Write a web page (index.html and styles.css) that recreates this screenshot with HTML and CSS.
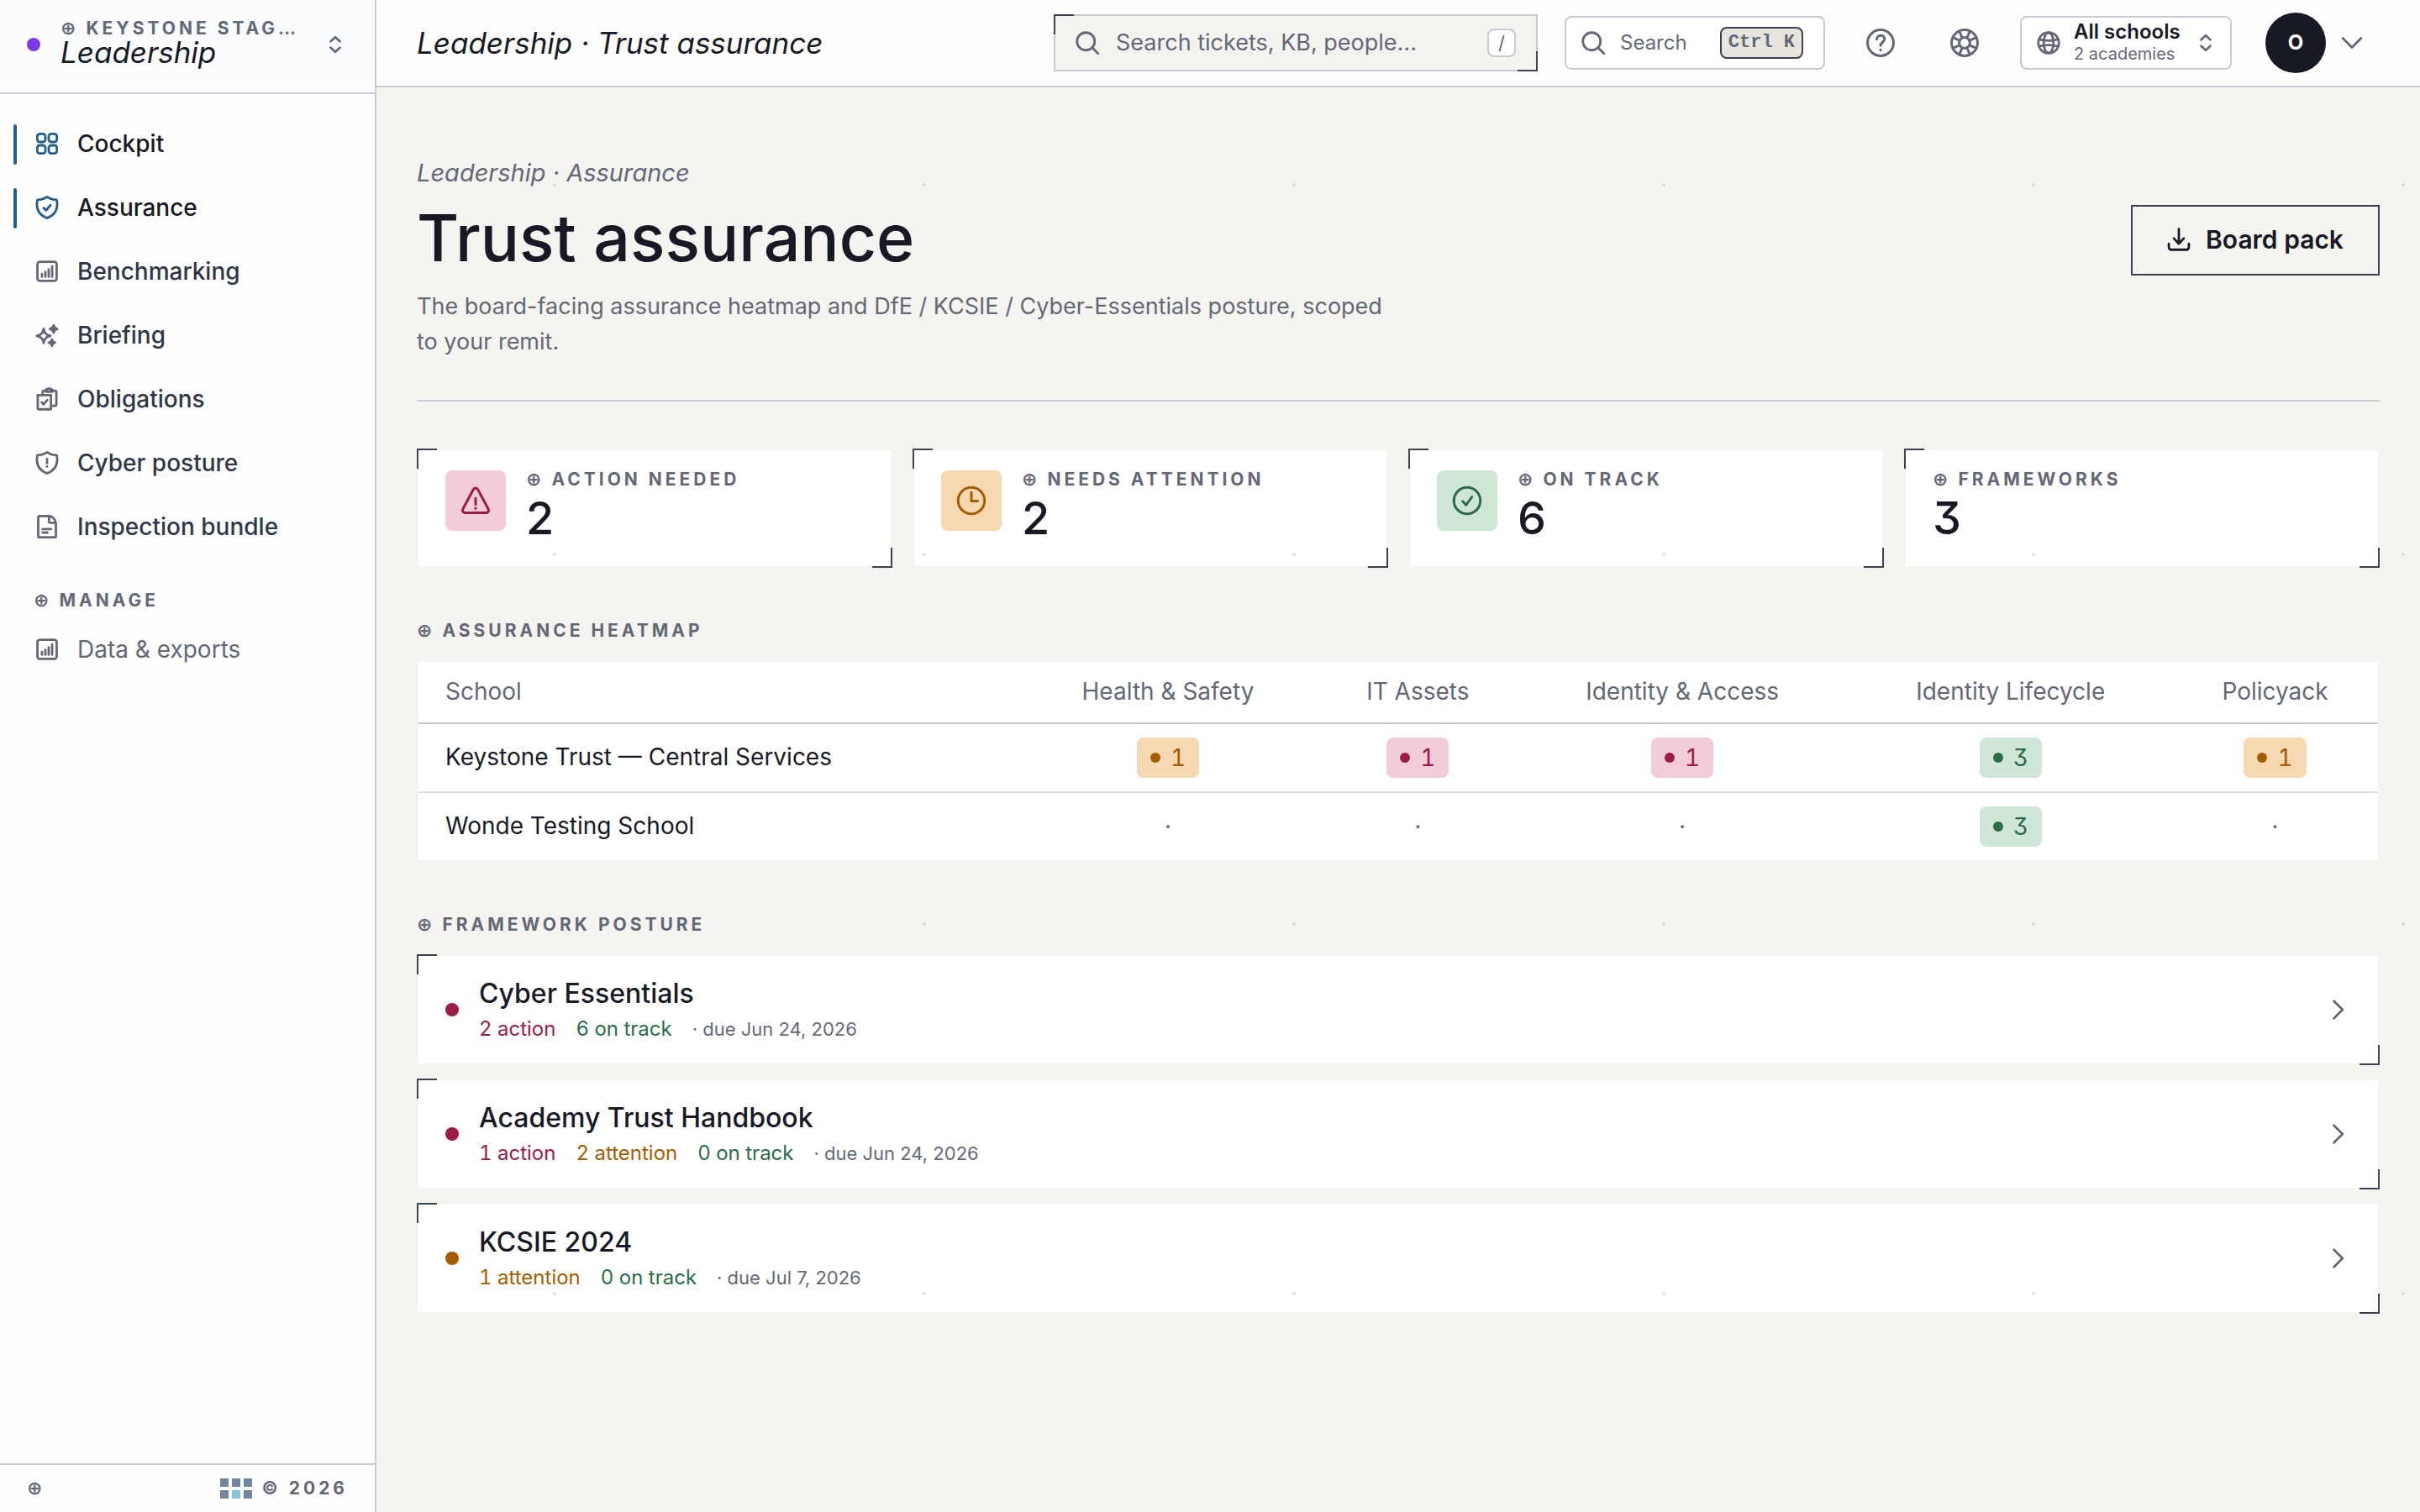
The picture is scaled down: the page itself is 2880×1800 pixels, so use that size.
FILE: index.html
```html
<!DOCTYPE html>
<html lang="en-GB">
<head>
<meta charset="utf-8">
<meta name="viewport" content="width=device-width, initial-scale=1">
<title>Leadership · Trust assurance</title>
<link rel="stylesheet" href="styles.css">
</head>
<body>
<svg class="sprite" aria-hidden="true">
  <symbol id="i-grid" viewBox="0 0 24 24"><rect x="2" y="2" width="8.300" height="8.300" rx="2.500"/><rect x="13.700" y="2" width="8.300" height="8.300" rx="2.500"/><rect x="2" y="13.700" width="8.300" height="8.300" rx="2.500"/><rect x="13.700" y="13.700" width="8.300" height="8.300" rx="2.500"/></symbol>
  <symbol id="i-shield-check" viewBox="0 0 24 24"><path d="M12 1.200c2.800 2 5.600 2.800 9.800 3C23.500 12.500 20.800 19.500 12 22.800 3.200 19.500 .5 12.500 2.200 4.200 6.400 4 9.200 3.200 12 1.200z"/><path d="M8.500 12.500l2.500 2.500 4.500-5.500"/></symbol>
  <symbol id="i-shield-alert" viewBox="0 0 24 24"><path d="M12 1.200c2.800 2 5.600 2.800 9.800 3C23.500 12.500 20.800 19.500 12 22.800 3.200 19.500 .5 12.500 2.200 4.200 6.400 4 9.200 3.200 12 1.200z"/><path d="M12 8v4.500M12 15.800v.2"/></symbol>
  <symbol id="i-chart" viewBox="0 0 24 24"><rect x="2.200" y="2.200" width="19.600" height="19.600" rx="2.500"/><path d="M6.800 14.800V17.500M10.300 12.500V17.500M13.700 10V17.500M17.200 7V17.500"/></symbol>
  <symbol id="i-sparkle" viewBox="0 0 24 24"><path d="M8.500 5.500c.8 4.500 2.500 6.200 7 7.200-4.500 1-6.200 2.700-7 7.200-.8-4.500-2.500-6.200-7-7.200 4.500-1 6.200-2.700 7-7.200z"/><path d="M18.700 2c.4 2.300 1.300 3.200 3.700 3.700-2.400.5-3.300 1.400-3.700 3.700-.4-2.300-1.300-3.200-3.700-3.700 2.400-.5 3.300-1.400 3.700-3.700zM17 16.500c.3 2 1.100 2.800 3.200 3.200-2.100.4-2.900 1.200-3.200 3.200-.3-2-1.100-2.800-3.200-3.200 2.100-.4 2.900-1.200 3.200-3.200z" fill="currentColor"/></symbol>
  <symbol id="i-clipboard" viewBox="0 0 24 24"><path d="M2.500 8h13.500v14.500H3.500a1 1 0 0 1-1-1z"/><path d="M7.500 8V5a1.500 1.500 0 0 1 1.500-1.500h2M17 3.500h3A1.500 1.500 0 0 1 21.500 5v12.500a1.500 1.500 0 0 1-1.500 1.500h-4"/><path d="M10.500 4.500c0-2 1.500-3 3.500-3s3.500 1 3.500 3z"/><path d="M6.500 15.500l2 2 3.800-4.500"/></symbol>
  <symbol id="i-file" viewBox="0 0 24 24"><path d="M14 1.200H4a1 1 0 0 0-1 1v19.600a1 1 0 0 0 1 1h16a1 1 0 0 0 1-1V8.500C21 5 17.500 1.200 14 1.200zM14 1.200V6.500a1.500 1.500 0 0 0 1.500 1.500H21"/><path d="M7.500 14.500h8.500M7.500 18h5"/></symbol>
  <symbol id="i-search" viewBox="0 0 24 24"><circle cx="10.500" cy="10.500" r="9"/><path d="M17 17l6 6"/></symbol>
  <symbol id="i-updown" viewBox="0 0 24 24"><path d="M6 8L12 2.500 18 8M6 16l6 5.500 6-5.500"/></symbol>
  <symbol id="i-help" viewBox="0 0 24 24"><circle cx="12" cy="12" r="10.300"/><path d="M9 9.200c0-4.200 6.200-4 6.200-.3 0 2.600-3.200 2.600-3.200 5.300M12 17.500v.3"/></symbol>
  <symbol id="i-buoy" viewBox="0 0 24 24"><circle cx="12" cy="12" r="10.300"/><circle cx="12" cy="12" r="4.300"/><path d="M7.800 2.800l2.400 5.500M16.200 2.800l-2.400 5.500M7.800 21.200l2.400-5.500M16.200 21.200l-2.400-5.500M2.800 7.800l5.500 2.400M2.800 16.200l5.500-2.400M21.200 7.800l-5.500 2.400M21.200 16.200l-5.500-2.400"/></symbol>
  <symbol id="i-globe" viewBox="0 0 24 24"><circle cx="12" cy="12" r="10.500"/><ellipse cx="12" cy="12" rx="5" ry="10.500"/><path d="M2.500 8.500C8 10 16 10 21.500 8.500M2.500 15.500C8 14 16 14 21.500 15.500"/></symbol>
  <symbol id="i-down" viewBox="0 0 24 24"><path d="M2 7L12 17 22 7"/></symbol>
  <symbol id="i-right" viewBox="0 0 24 24"><path d="M7 2.500L16.500 12 7 21.500"/></symbol>
  <symbol id="i-download" viewBox="0 0 24 24"><path d="M12 1.500V16M7 11l5 5.500 5-5.500M1.800 16.500V20a2.500 2.500 0 0 0 2.500 2.500h15.400a2.500 2.500 0 0 0 2.500-2.500v-3.500"/></symbol>
  <symbol id="i-warn" viewBox="0 0 24 24"><path d="M10.200 3.200L1.900 18.700a2 2 0 0 0 1.800 3h16.600a2 2 0 0 0 1.800-3L13.800 3.200a2 2 0 0 0-3.600 0zM12 10v5M12 17.800v.3"/></symbol>
  <symbol id="i-clock" viewBox="0 0 24 24"><circle cx="12" cy="12" r="10.500"/><path d="M12 5.500V12.300h5"/></symbol>
  <symbol id="i-ok" viewBox="0 0 24 24"><circle cx="12" cy="12" r="10.500"/><path d="M8.500 12.500l2.700 3 4.600-6.500"/></symbol>
</svg>

<div class="app">
  <aside class="sidebar">
    <button class="workspace" type="button">
      <span class="workspace-dot"></span>
      <span class="workspace-text">
        <span class="eyebrow">Keystone Stag…</span>
        <span class="workspace-name">Leadership</span>
      </span>
      <svg class="icon icon-sm"><use href="#i-updown"/></svg>
    </button>
    <nav class="nav">
      <a class="nav-item active" href="#"><svg class="icon"><use href="#i-grid"/></svg>Cockpit</a>
      <a class="nav-item active" href="#"><svg class="icon"><use href="#i-shield-check"/></svg>Assurance</a>
      <a class="nav-item" href="#"><svg class="icon"><use href="#i-chart"/></svg>Benchmarking</a>
      <a class="nav-item" href="#"><svg class="icon"><use href="#i-sparkle"/></svg>Briefing</a>
      <a class="nav-item" href="#"><svg class="icon"><use href="#i-clipboard"/></svg>Obligations</a>
      <a class="nav-item" href="#"><svg class="icon"><use href="#i-shield-alert"/></svg>Cyber posture</a>
      <a class="nav-item" href="#"><svg class="icon"><use href="#i-file"/></svg>Inspection bundle</a>
      <h2 class="eyebrow nav-heading">Manage</h2>
      <a class="nav-item minor" href="#"><svg class="icon"><use href="#i-chart"/></svg>Data &amp; exports</a>
    </nav>
    <footer class="side-footer">
      <span class="eyebrow"></span>
      <span class="copyright"><svg class="mark" viewBox="0 0 38 24"><path d="M0 0h10v10H0zM14 0h10v10H14zM28 0h10v10H28zM0 14h10v10H0zM28 14h10v10H28z" fill="#75859b"/><path d="M14 14h10v10H14z" fill="#8bc4d9"/></svg>© 2026</span>
    </footer>
  </aside>

  <div class="page">
    <header class="topbar">
      <div class="topbar-title">Leadership · Trust assurance</div>
      <label class="search bracket">
        <svg class="icon"><use href="#i-search"/></svg>
        <input type="text" placeholder="Search tickets, KB, people..." aria-label="Search tickets, KB, people">
        <kbd class="key">/</kbd>
      </label>
      <button class="quick box" type="button"><svg class="icon"><use href="#i-search"/></svg><span>Search</span><kbd class="key key-dark">Ctrl K</kbd></button>
      <button class="round" type="button" aria-label="Help"><svg class="icon icon-lg"><use href="#i-help"/></svg></button>
      <button class="round" type="button" aria-label="Support"><svg class="icon icon-lg"><use href="#i-buoy"/></svg></button>
      <button class="schools box" type="button">
        <svg class="icon"><use href="#i-globe"/></svg>
        <span class="schools-text"><strong>All schools</strong><span>2 academies</span></span>
        <svg class="icon icon-sm"><use href="#i-updown"/></svg>
      </button>
      <button class="user" type="button" aria-label="Account"><span class="avatar">O</span><svg class="icon icon-chev"><use href="#i-down"/></svg></button>
    </header>

    <main class="content">
      <header class="page-head">
        <p class="crumb">Leadership · Assurance</p>
        <div class="head-row">
          <div class="head-text">
            <h1>Trust assurance</h1>
            <p class="lede">The board-facing assurance heatmap and DfE / KCSIE / Cyber-Essentials posture, scoped to your remit.</p>
          </div>
          <button class="export" type="button"><svg class="icon"><use href="#i-download"/></svg>Board pack</button>
        </div>
      </header>

      <section class="stats">
        <article class="card bracket stat"><span class="stat-icon bad"><svg class="icon icon-lg"><use href="#i-warn"/></svg></span><div><h2 class="eyebrow">Action needed</h2><p class="figure">2</p></div></article>
        <article class="card bracket stat"><span class="stat-icon warn"><svg class="icon icon-lg"><use href="#i-clock"/></svg></span><div><h2 class="eyebrow">Needs attention</h2><p class="figure">2</p></div></article>
        <article class="card bracket stat"><span class="stat-icon good"><svg class="icon icon-lg"><use href="#i-ok"/></svg></span><div><h2 class="eyebrow">On track</h2><p class="figure">6</p></div></article>
        <article class="card bracket stat"><div><h2 class="eyebrow">Frameworks</h2><p class="figure">3</p></div></article>
      </section>

      <section class="section">
        <h2 class="eyebrow section-title">Assurance heatmap</h2>
        <div class="card">
          <table class="heatmap">
            <colgroup><col class="c-school"><col class="c-health"><col class="c-assets"><col class="c-access"><col class="c-life"><col class="c-policy"></colgroup>
            <thead><tr><th scope="col">School</th><th scope="col">Health &amp; Safety</th><th scope="col">IT Assets</th><th scope="col">Identity &amp; Access</th><th scope="col">Identity Lifecycle</th><th scope="col">Policyack</th></tr></thead>
            <tbody>
              <tr><th scope="row">Keystone Trust — Central Services</th><td><span class="pill warn">1</span></td><td><span class="pill bad">1</span></td><td><span class="pill bad">1</span></td><td><span class="pill good">3</span></td><td><span class="pill warn">1</span></td></tr>
              <tr><th scope="row">Wonde Testing School</th><td>·</td><td>·</td><td>·</td><td><span class="pill good">3</span></td><td>·</td></tr>
            </tbody>
          </table>
        </div>
      </section>

      <section class="section">
        <h2 class="eyebrow section-title">Framework posture</h2>
        <div class="frameworks">
          <a class="card bracket framework" href="#"><span class="status is-bad"></span><div class="framework-text"><h3>Cyber Essentials</h3><p class="meta"><span class="t-bad">2 action</span><span class="t-good">6 on track</span><span class="due">· due Jun 24, 2026</span></p></div><svg class="icon icon-chev"><use href="#i-right"/></svg></a>
          <a class="card bracket framework" href="#"><span class="status is-bad"></span><div class="framework-text"><h3>Academy Trust Handbook</h3><p class="meta"><span class="t-bad">1 action</span><span class="t-warn">2 attention</span><span class="t-good">0 on track</span><span class="due">· due Jun 24, 2026</span></p></div><svg class="icon icon-chev"><use href="#i-right"/></svg></a>
          <a class="card bracket framework" href="#"><span class="status is-warn"></span><div class="framework-text"><h3>KCSIE 2024</h3><p class="meta"><span class="t-warn">1 attention</span><span class="t-good">0 on track</span><span class="due">· due Jul 7, 2026</span></p></div><svg class="icon icon-chev"><use href="#i-right"/></svg></a>
        </div>
      </section>
    </main>
  </div>
</div>
</body>
</html>
```
FILE: styles.css
```css
:root {
  --ink: #171a24;
  --ink-2: #2f3747;
  --muted: #636877;
  --line: #c8cad6;
  --line-soft: #dedfe7;
  --edge: #3a4254;
  --paper: #f5f4f0;
  --accent: #255d8e;
  --bad: #9b1b47;
  --bad-bg: #f2ccd8;
  --warn: #a55c00;
  --warn-bg: #f6d9b2;
  --good: #2a6b4a;
  --good-bg: #cfe6d7;
}

*, *::before, *::after { box-sizing: border-box; }

body {
  margin: 0;
  background: var(--paper);
  color: var(--ink);
  font: 400 28px/42px Inter, "Liberation Sans", sans-serif;
  font-feature-settings: "cv09";
}

h1, h2, h3, p { margin: 0; font-weight: 400; }
a { color: inherit; text-decoration: none; }
button, input { font: inherit; color: inherit; background: none; border: 0; padding: 0; margin: 0; }
button { cursor: pointer; text-align: left; }
.sprite { display: none; }

.icon {
  flex: none;
  width: 28px;
  height: 28px;
  fill: none;
  stroke: currentColor;
  stroke-width: 2.4;
  stroke-linecap: round;
  stroke-linejoin: round;
  overflow: visible;
}
.icon-sm { width: 22px; height: 22px; stroke-width: 3; }
.icon-lg { width: 36px; height: 36px; stroke-width: 2; }
.icon-chev { width: 26px; height: 26px; stroke-width: 2.6; }

.eyebrow, .copyright {
  color: var(--muted);
  font-size: 21px;
  line-height: 38px;
  font-weight: 700;
  letter-spacing: 4px;
  text-transform: uppercase;
  white-space: nowrap;
}
.eyebrow { display: flex; align-items: center; gap: 12px; }
.eyebrow::before {
  content: "⊕";
  font: 700 22px/22px "DejaVu Sans", sans-serif;
  letter-spacing: 0;
}

.app { display: flex; min-height: 100vh; }

/* Sidebar */
.sidebar {
  flex: none;
  display: flex;
  flex-direction: column;
  width: 448px;
  background: linear-gradient(#f8fafc, #fefefe 160px);
  border-right: 2px solid var(--line);
}
.workspace {
  display: flex;
  align-items: center;
  gap: 24px;
  height: 112px;
  padding: 0 36px 4px 32px;
  border-bottom: 2px solid var(--line);
}
.workspace-dot { flex: none; width: 16px; height: 16px; border-radius: 50%; background: #7c3aed; }
.workspace-text { flex: 1; min-width: 0; display: flex; flex-direction: column; padding-bottom: 4px; }
.workspace-text .eyebrow { line-height: 22px; }
.workspace-name { font-size: 35px; line-height: 35px; font-style: italic; }
.workspace .icon { color: var(--muted); }

.nav { flex: 1; display: flex; flex-direction: column; gap: 4px; padding: 24px 16px; }
.nav-item {
  display: flex;
  align-items: center;
  gap: 22px;
  height: 72px;
  padding: 0 0 2px 22px;
  color: var(--ink-2);
  font-weight: 500;
  border-left: 4px solid transparent;
}
.nav-item .icon { color: var(--muted); }
.nav-item.active { color: var(--ink); position: relative; }
.nav-item.active .icon { color: var(--accent); }
.nav-item.active::before {
  content: "";
  position: absolute;
  left: -4px;
  top: 12px;
  width: 4px;
  height: 48px;
  border-radius: 2px;
  background: var(--accent);
}
.nav-item.minor { color: var(--muted); font-weight: 400; }
.nav-heading { margin-top: 28px; padding-left: 24px; }
.side-footer {
  display: flex;
  align-items: center;
  justify-content: space-between;
  height: 58px;
  padding: 0 32px;
  border-top: 2px solid var(--line);
}
.copyright { display: flex; align-items: center; gap: 12px; }
.mark { width: 38px; height: 24px; }

/* Top bar */
.page { flex: 1; min-width: 0; position: relative; }
.topbar {
  display: flex;
  align-items: center;
  gap: 32px;
  height: 104px;
  padding: 0 50px 0 48px;
  background: #fdfdfd;
  border-bottom: 2px solid var(--line);
  color: var(--muted);
}
.topbar-title { margin-right: auto; color: var(--ink); font-size: 35px; font-style: italic; white-space: nowrap; }
.bracket { position: relative; }
.bracket::before, .bracket::after {
  content: "";
  position: absolute;
  width: 24px;
  height: 24px;
  border: 0 solid var(--edge);
  pointer-events: none;
}
.bracket::before { left: -2px; top: -2px; border-width: 2px 0 0 2px; }
.bracket::after { right: -2px; bottom: -2px; border-width: 0 2px 2px 0; }

.search {
  display: flex;
  align-items: center;
  gap: 20px;
  width: 576px;
  height: 68px;
  padding: 0 24px;
  background: #f4f3ef;
  border: 2px solid var(--line);
  font-size: 27px;
}
.search input { flex: 1; min-width: 0; outline: 0; }
.search input::placeholder { color: var(--muted); opacity: 1; }
.key {
  display: inline-flex;
  align-items: center;
  justify-content: center;
  min-width: 34px;
  height: 34px;
  background: #fff;
  border: 2px solid var(--line);
  border-radius: 8px;
  font: 400 22px/28px Inter, sans-serif;
}
.key-dark {
  height: 38px;
  padding: 0 8px;
  background: #e7e4de;
  border-color: var(--edge);
  font: 700 22px/28px "Liberation Mono", monospace;
}
.box { display: flex; align-items: center; height: 64px; border: 2px solid var(--line); border-radius: 8px; background: #fff; }
.quick { width: 310px; gap: 18px; padding: 0 24px 0 18px; font-size: 24px; }
.quick .key { margin-left: auto; }
.round { display: flex; align-items: center; justify-content: center; width: 68px; height: 68px; }
.schools { width: 252px; gap: 16px; padding: 0 18px; white-space: nowrap; }
.schools-text { flex: 1; min-width: 0; display: flex; flex-direction: column; font-size: 20px; line-height: 26px; }
.schools-text strong { color: var(--ink); font-size: 24px; font-weight: 600; }
.user { display: flex; align-items: center; gap: 18px; padding: 0 18px 0 8px; }
.avatar {
  display: flex;
  align-items: center;
  justify-content: center;
  width: 72px;
  height: 72px;
  border-radius: 50%;
  background: #171a24;
  color: #fff;
  font-size: 24px;
  font-weight: 700;
}

/* Faint dot lattice laid over the whole page area */
.page::after {
  content: "";
  position: absolute;
  inset: 104px 0 0 0;
  pointer-events: none;
  background: radial-gradient(circle, rgba(23, 26, 36, .12) 2px, transparent 2px) -8px -104px / 440px 440px;
}

/* Content */
.content { padding: 80px 48px; }
.page-head { padding-bottom: 48px; border-bottom: 2px solid var(--line); }
.crumb { color: var(--muted); font-size: 29px; line-height: 44px; font-style: italic; }
.head-row { display: flex; align-items: flex-start; justify-content: space-between; gap: 48px; margin-top: 16px; }
h1 { font-size: 77px; line-height: 78px; font-weight: 500; }
.lede { max-width: 1170px; margin-top: 22px; color: var(--muted); font-size: 27px; }
.export {
  display: flex;
  align-items: center;
  justify-content: center;
  gap: 18px;
  min-width: 296px;
  height: 84px;
  padding-bottom: 2px;
  border: 2px solid var(--edge);
  font-size: 30px;
  font-weight: 600;
}

.card { background: #fff; background-clip: padding-box; border: 2px solid transparent; }
.stats { display: grid; grid-template-columns: repeat(4, 1fr); gap: 24px; margin-top: 56px; }
.stat { display: flex; gap: 24px; height: 142px; padding: 24px 32px; }
.stat .eyebrow { line-height: 22px; }
.figure { font-size: 54px; line-height: 70px; font-weight: 500; }
.stat-icon { display: flex; align-items: center; justify-content: center; width: 72px; height: 72px; border-radius: 8px; }
.bad { color: var(--bad); background: var(--bad-bg); }
.warn { color: var(--warn); background: var(--warn-bg); }
.good { color: var(--good); background: var(--good-bg); }

.section { margin-top: 56px; }
.section-title { margin-bottom: 16px; }

.heatmap { width: 100%; border-collapse: separate; border-spacing: 0; table-layout: fixed; }
.heatmap th, .heatmap td { height: 80px; padding: 0; font-weight: 400; text-align: center; vertical-align: middle; }
.heatmap th { padding-bottom: 2px; }
.heatmap thead th { height: 74px; color: var(--muted); border-bottom: 2px solid var(--line); }
.heatmap th:first-child { padding-left: 32px; text-align: left; }
.heatmap tbody tr:first-child > * { height: 82px; border-bottom: 2px solid var(--line-soft); }
.heatmap td { color: var(--muted); }
.c-school { width: 30.5%; }
.c-health { width: 15.5%; }
.c-assets { width: 10%; }
.c-access { width: 17%; }
.c-life { width: 16.5%; }
.c-policy { width: 10.5%; }
.pill {
  display: inline-flex;
  align-items: center;
  gap: 12px;
  height: 48px;
  padding: 0 16px;
  border-radius: 8px;
  font-variant-numeric: tabular-nums;
  vertical-align: middle;
}
.pill.bad { color: var(--bad); }
.pill.warn { color: var(--warn); }
.pill.good { color: var(--good); }
.pill::before { content: ""; width: 12px; height: 12px; border-radius: 50%; background: currentColor; }

.frameworks { display: grid; gap: 16px; }
.framework { display: flex; align-items: center; gap: 24px; height: 132px; padding: 0 34px 0 32px; }
.framework > .icon { color: var(--muted); }
.framework-text { flex: 1; padding-top: 2px; }
h3 { font-size: 32px; line-height: 44px; font-weight: 500; }
.meta { display: flex; gap: 24px; color: var(--muted); font-size: 24px; line-height: 40px; font-variant-numeric: tabular-nums; }
.due { font-size: 22px; font-variant-numeric: normal; }
.status { width: 16px; height: 16px; border-radius: 50%; }
.is-bad { background: var(--bad); }
.is-warn { background: var(--warn); }
.t-bad { color: var(--bad); }
.t-warn { color: var(--warn); }
.t-good { color: var(--good); }
```
